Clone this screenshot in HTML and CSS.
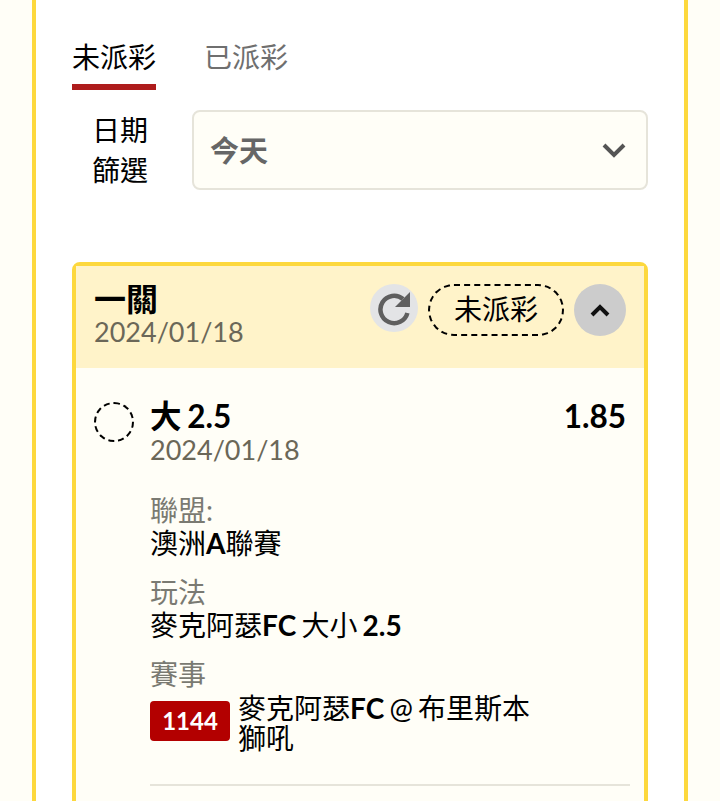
FILE: index.html
```html
<!DOCTYPE html>
<html lang="zh-Hant">
<head>
  <meta charset="UTF-8" />
  <meta name="viewport" content="width=device-width, initial-scale=1.0" />
  <title>未派彩</title>
  <link rel="stylesheet" href="styles.css">
</head>
<body>
  <div class="panel">
    <div class="tabs">
      <div class="tab active">未派彩</div>
      <div class="tab">已派彩</div>
    </div>

    <div class="filter">
      <div class="filter-label">日期<br>篩選</div>
      <div class="select">
        <span>今天</span>
        <svg class="select-arrow" width="24" height="16" viewBox="0 0 24 16"><path d="M2 3l10 10L22 3" fill="none" stroke="#555" stroke-width="4"/></svg>
      </div>
    </div>

    <div class="card">
      <div class="card-head">
        <div class="card-title">
          <div class="title">一關</div>
          <div class="date">2024/01/18</div>
        </div>
        <div class="refresh">
          <svg width="36" height="36" viewBox="0 0 36 36"><path d="M31.4 23A13.7 13.7 0 1 1 27 9" fill="none" stroke="#5f5f5f" stroke-width="4.5"/><path d="M34 2v15H19z" fill="#5f5f5f"/></svg>
        </div>
        <div class="status">未派彩</div>
        <div class="toggle">
          <svg width="20" height="14" viewBox="0 0 20 14"><path d="M2 12l8-8 8 8" fill="none" stroke="#111" stroke-width="4"/></svg>
        </div>
      </div>

      <div class="card-body">
        <div class="bet">
          <div class="circle"></div>
          <div class="bet-info">
            <div class="bet-top">
              <div class="bet-name">大 2.5</div>
              <div class="odds">1.85</div>
            </div>
            <div class="date">2024/01/18</div>

            <div class="field">
              <div class="field-label">聯盟:</div>
              <div class="field-value">澳洲<b>A</b>聯賽</div>
            </div>
            <div class="field">
              <div class="field-label">玩法</div>
              <div class="field-value">麥克阿瑟<b>FC</b> 大小 <b>2.5</b></div>
            </div>
            <div class="field">
              <div class="field-label">賽事</div>
              <div class="match">
                <div class="match-no">1144</div>
                <div class="match-name">麥克阿瑟<b>FC</b> @ 布里斯本獅吼</div>
              </div>
            </div>
          </div>
        </div>
        <div class="divider"></div>
      </div>
    </div>
  </div>
</body>
</html>
```

FILE: styles.css
```css
html, body {
  height: 801px;
  overflow: hidden;
}
body {
  margin: 0;
  padding: 0 32px;
  background: #fffef7;
  font-family: Lato, "Noto Sans CJK TC", sans-serif;
  color: #000;
}
.panel {
  box-sizing: border-box;
  background: #fff;
  border-left: 4px solid #fdd83d;
  border-right: 4px solid #fdd83d;
  padding: 36px 36px 40px;
}
.tabs {
  display: flex;
  gap: 48px;
}
.tab {
  font-size: 28px;
  line-height: 42px;
  height: 48px;
  color: #6f6f6f;
}
.tab.active {
  color: #000;
  border-bottom: 6px solid #ae1c1c;
}
.filter {
  display: flex;
  align-items: center;
  margin-top: 20px;
}
.filter-label {
  width: 120px;
  padding-right: 44px;
  box-sizing: border-box;
  text-align: right;
  font-size: 28px;
  line-height: 40px;
}
.select {
  flex: 1;
  height: 80px;
  box-sizing: border-box;
  background: #fffef7;
  border: 2px solid #e6e4da;
  border-radius: 8px;
  padding: 0 20px 2px 16px;
  display: flex;
  align-items: center;
  justify-content: space-between;
  font-size: 29px;
  font-weight: 700;
  color: #666;
}
.select-arrow {
  margin-top: 2px;
}
.card {
  margin-top: 72px;
  border: 4px solid #fdd83d;
  border-radius: 8px;
  background: #fffef7;
}
.card-head {
  height: 102px;
  box-sizing: border-box;
  background: #fff3c9;
  padding: 18px 18px 0;
  display: flex;
  align-items: flex-start;
}
.card-title {
  flex: 1;
  margin-top: -3px;
}
.title {
  font-size: 32px;
  line-height: 35px;
  font-weight: 700;
}
.date {
  font-size: 27px;
  line-height: 32px;
  color: #6b6758;
}
.refresh {
  width: 48px;
  height: 48px;
  margin-right: 10px;
  border-radius: 50%;
  background: #e3e4e6;
  display: flex;
  align-items: center;
  justify-content: center;
}
.status {
  width: 136px;
  height: 52px;
  box-sizing: border-box;
  border: 2px dashed #000;
  border-radius: 26px;
  font-size: 28px;
  line-height: 46px;
  text-align: center;
  margin-right: 10px;
}
.toggle {
  width: 52px;
  height: 52px;
  border-radius: 50%;
  background: #ccc;
  display: flex;
  align-items: center;
  justify-content: center;
}
.card-body {
  padding: 30px 14px 60px 18px;
}
.bet {
  display: flex;
}
.circle {
  width: 40px;
  height: 40px;
  box-sizing: border-box;
  border: 2px dashed #000;
  border-radius: 50%;
  margin: 4px 16px 0 0;
  flex-shrink: 0;
}
.bet-info {
  flex: 1;
}
.bet-top {
  display: flex;
  justify-content: space-between;
  padding-right: 4px;
}
.bet-name, .odds {
  font-size: 31.5px;
  line-height: 36px;
  font-weight: 700;
  word-spacing: -2px;
}
.field {
  margin-top: 16px;
  font-size: 28px;
  line-height: 33px;
  word-spacing: -2px;
}
.date + .field {
  margin-top: 28px;
}
.field-label {
  color: #7a7a72;
}
.match {
  display: flex;
  align-items: flex-start;
  gap: 9px;
  margin-top: 2px;
}
.match-no {
  width: 80px;
  height: 40px;
  border-radius: 4px;
  background: #b30000;
  color: #fff;
  font-size: 24px;
  font-weight: 700;
  line-height: 40px;
  text-align: center;
  margin-top: 8px;
  flex-shrink: 0;
}
.match-name {
  width: 300px;
  line-height: 30px;
  margin-left: -1px;
}
.divider {
  height: 2px;
  margin: 31px 0 0 56px;
  background: #e6e4da;
}
```
